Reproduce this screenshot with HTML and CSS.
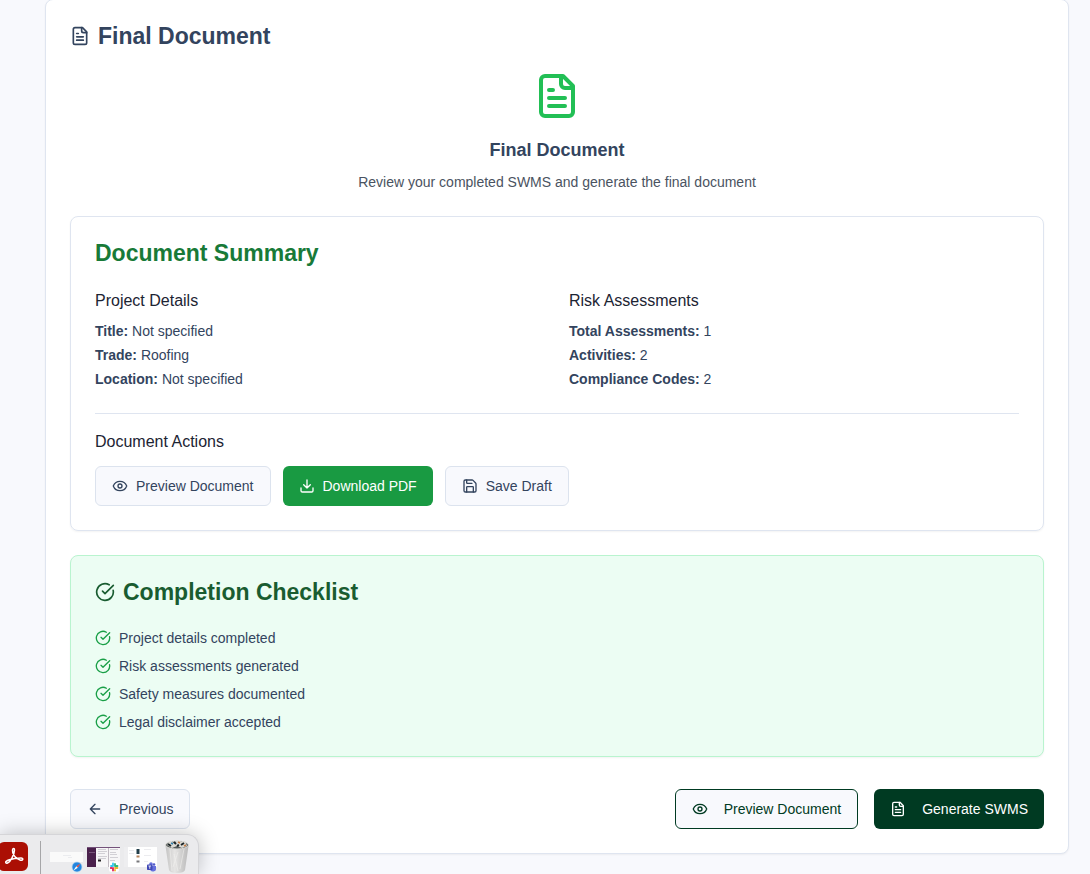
FILE: index.html
```html
<!DOCTYPE html>
<html lang="en">
<head>
<meta charset="utf-8">
<title>Final Document</title>
<link rel="stylesheet" href="styles.css">
</head>
<body>
<svg class="sprite" aria-hidden="true">
  <symbol id="file" viewBox="0 0 24 24"><path d="M15 2H6a2 2 0 0 0-2 2v16a2 2 0 0 0 2 2h12a2 2 0 0 0 2-2V7Z"/><path d="M14 2v4a2 2 0 0 0 2 2h4M10 9H8M16 13H8M16 17H8"/></symbol>
  <symbol id="eye" viewBox="0 0 24 24"><path d="M2.062 12.348a1 1 0 0 1 0-.696 10.75 10.75 0 0 1 19.876 0 1 1 0 0 1 0 .696 10.75 10.75 0 0 1-19.876 0"/><circle cx="12" cy="12" r="3"/></symbol>
  <symbol id="download" viewBox="0 0 24 24"><path d="M21 15v4a2 2 0 0 1-2 2H5a2 2 0 0 1-2-2v-4M7 10l5 5 5-5M12 15V3"/></symbol>
  <symbol id="save" viewBox="0 0 24 24"><path d="M15.2 3a2 2 0 0 1 1.4.6l3.8 3.8a2 2 0 0 1 .6 1.4V19a2 2 0 0 1-2 2H5a2 2 0 0 1-2-2V5a2 2 0 0 1 2-2z"/><path d="M17 21v-7a1 1 0 0 0-1-1H8a1 1 0 0 0-1 1v7M7 3v4a1 1 0 0 0 1 1h7"/></symbol>
  <symbol id="check" viewBox="0 0 24 24"><path d="M21.801 10A10 10 0 1 1 17 3.335"/><path d="m9 11 3 3L22 4"/></symbol>
  <symbol id="back" viewBox="0 0 24 24"><path d="m12 19-7-7 7-7M19 12H5"/></symbol>
</svg>

<main class="card">
  <h1 class="heading"><svg class="icon icon-md"><use href="#file"/></svg>Final Document</h1>

  <header class="intro">
    <svg class="icon icon-xl"><use href="#file"/></svg>
    <h2 class="intro-title">Final Document</h2>
    <p class="intro-text">Review your completed SWMS and generate the final document</p>
  </header>

  <section class="panel">
    <h2 class="heading heading-green">Document Summary</h2>
    <div class="columns">
      <div>
        <h3 class="subheading">Project Details</h3>
        <div class="facts">
          <p><strong>Title:</strong> Not specified</p>
          <p><strong>Trade:</strong> Roofing</p>
          <p><strong>Location:</strong> Not specified</p>
        </div>
      </div>
      <div>
        <h3 class="subheading">Risk Assessments</h3>
        <div class="facts">
          <p><strong>Total Assessments:</strong> 1</p>
          <p><strong>Activities:</strong> 2</p>
          <p><strong>Compliance Codes:</strong> 2</p>
        </div>
      </div>
    </div>
    <div class="actions">
      <h3 class="subheading">Document Actions</h3>
      <div class="button-row">
        <button class="button" type="button"><svg class="icon"><use href="#eye"/></svg>Preview Document</button>
        <button class="button button-green" type="button"><svg class="icon"><use href="#download"/></svg>Download PDF</button>
        <button class="button" type="button"><svg class="icon"><use href="#save"/></svg>Save Draft</button>
      </div>
    </div>
  </section>

  <section class="panel panel-green">
    <h2 class="heading heading-dark"><svg class="icon icon-md"><use href="#check"/></svg>Completion Checklist</h2>
    <ul class="checklist">
      <li><svg class="icon"><use href="#check"/></svg>Project details completed</li>
      <li><svg class="icon"><use href="#check"/></svg>Risk assessments generated</li>
      <li><svg class="icon"><use href="#check"/></svg>Safety measures documented</li>
      <li><svg class="icon"><use href="#check"/></svg>Legal disclaimer accepted</li>
    </ul>
  </section>

  <footer class="footer">
    <button class="button button-wide" type="button"><svg class="icon"><use href="#back"/></svg>Previous</button>
    <div class="footer-end">
      <button class="button button-wide button-outline" type="button"><svg class="icon"><use href="#eye"/></svg>Preview Document</button>
      <button class="button button-wide button-dark" type="button"><svg class="icon"><use href="#file"/></svg>Generate SWMS</button>
    </div>
  </footer>
</main>

<aside class="dock" aria-label="Dock">
  <svg class="dock-art" width="198" height="39" viewBox="0 0 198 39">
    <defs>
      <linearGradient id="bin" x1="0" x2="1"><stop offset="0" stop-color="#c3c3c3"/><stop offset=".4" stop-color="#e6e5e4"/><stop offset="1" stop-color="#b9b9b9"/></linearGradient>
    </defs>
    <rect x="-2" y="7" width="30" height="29" rx="6" fill="#ab0f04"/>
    <path d="M6 28c-2-2 6-5 15-5 3 0 2 3-1 2-4-1-8-6-7.500-10 .3-2 2-2 2 0 0 4-4 12-7 13-.6.300-1.200.300-1.500 0z" fill="none" stroke="#fff" stroke-width="1.500"/>
    <path d="M40.500 6v33" stroke="#a6a6a8"/>
    <rect x="50" y="17" width="33" height="10" fill="#fafafa"/>
    <path d="M63 20.500h8M68 22.500h4" stroke="#e7e8ec" stroke-width=".8"/>
    <circle cx="77" cy="32" r="5" fill="#2386df" stroke="#b9d8ef" stroke-width=".7"/>
    <path d="m80.500 28.500-2.700 4.300-1.600-1.600z" fill="#f05745"/><path d="m73.500 35.500 2.700-4.300 1.600 1.600z" fill="#fff"/>
    <rect x="87" y="12" width="33" height="20" fill="#f7f6f7"/>
    <path d="M87 12h9v20h-9z" fill="#4a214c"/><path d="M87 12.500h33" stroke="#74517a"/><path d="M89 17.500h6" stroke="#8d6c8f" stroke-width=".7"/>
    <path d="M98 14.500h8M98 16.500h9M98 18.500h7M98 21.500h9M98 23.500h8M110 14.500h8M110 17.500h6M110 19.500h7M110 22.500h8M110 25.500h5" stroke="#d2d0d5"/>
    <path d="M108.500 13v19" stroke="#9a929c" stroke-width=".6"/><path d="M98 25.500h3" stroke="#222" stroke-width="2"/>
    <rect x="109" y="27" width="10" height="10" rx="2.500" fill="#fff"/>
    <g fill="none" stroke-width="1.800" stroke-linecap="round"><path d="M113 28.500v2.500M111 31h1" stroke="#36c5f0"/><path d="M115 29v2M117.500 31h-2" stroke="#2eb67d"/><path d="M115 33h2.500M115 35.500v-.5" stroke="#ecb22e"/><path d="M113 33v2.500M110.800 33h.5" stroke="#e01e5a"/></g>
    <rect x="124" y="12" width="33" height="20" fill="#fff"/><path d="M124 12h4v20h-4z" fill="#eeeef0"/><path d="M129 15.500h5M129 18.500h5M144 14.500h7M144 20.500h7M144 26.500h4" stroke="#ececef"/>
    <path d="M138 14v5" stroke="#233f4b" stroke-width="3"/><path d="M136.500 21.500h3" stroke="#b7855d" stroke-width="2"/><path d="M136.500 26.500h3" stroke="#77777a" stroke-width="2"/>
    <circle cx="151" cy="29" r="1.800" fill="#6670dd"/><circle cx="154" cy="29.500" r="1.300" fill="#5059c9"/><path d="M149 31h7v2a3 3 0 0 1-6 1z" fill="#6670dd"/><rect x="147" y="29.500" width="5.500" height="5.500" rx=".8" fill="#3f48b6"/><path d="M148.400 31h2.700M149.750 31v2.800" stroke="#fff" stroke-width=".8"/>
    <path d="M165.500 11h23l-3.500 24q-1 3-8 3t-8-3z" fill="url(#bin)"/>
    <path d="m170 14 2 22M174 19l4 17M184 14l-4 20M178 17l-5 15" stroke="#f5f4f2" opacity=".5"/>
    <ellipse cx="177" cy="10" rx="11.500" ry="4" fill="#555a59" stroke="#deddda"/>
    <path d="m167 10 3-4 4 2 3-3 4 2 4-1 2 5-5 2-5-2-5 2z" fill="#dcdad4"/>
    <path d="m168 9 3 2M174 7l2 2M181 10l3-2M177 11l2-1" stroke="#1c2628" stroke-width="2"/><path d="m171 8 2 1" stroke="#327eaa" stroke-width="1.500"/><path d="m178 7 2 1M184 11l2-1" stroke="#c47b43" stroke-width="1.500"/>
  </svg>
</aside>
</body>
</html>
```

FILE: styles.css
```css
* { box-sizing: border-box; }

body {
  margin: 0;
  padding: 0 21px 20px 45px;
  background: #f8f9fd;
  color: #33445e;
  font-family: "Liberation Sans", Arial, sans-serif;
  font-size: 14px;
  line-height: 20px;
}

h1, h2, h3, p, ul { margin: 0; padding: 0; }

.sprite { position: absolute; width: 0; height: 0; }

.icon {
  width: 16px;
  height: 16px;
  flex: none;
  fill: none;
  stroke: currentColor;
  stroke-width: 2;
  stroke-linecap: round;
  stroke-linejoin: round;
}
.icon-md { width: 20px; height: 20px; }
.icon-xl { width: 48px; height: 48px; color: #22bf55; }

.card {
  margin-top: -1px;
  padding: 24px;
  background: #fff;
  border: 1px solid #dfe5f0;
  border-radius: 8px;
  box-shadow: 0 1px 2px rgba(0, 0, 0, 0.05);
}

.heading {
  display: flex;
  align-items: center;
  gap: 8px;
  margin-bottom: 24px;
  font-size: 23px;
  line-height: 24px;
  font-weight: 700;
}
.heading-green { color: #187a38; }
.heading-dark { color: #195c30; }

.intro {
  display: flex;
  flex-direction: column;
  align-items: center;
  margin-bottom: 24px;
  text-align: center;
}
.intro-title { margin: 16px 0 8px; font-size: 18px; line-height: 28px; }
.intro-text { color: #4a5361; }

.panel {
  margin-bottom: 24px;
  padding: 24px;
  border: 1px solid #dfe5f0;
  border-radius: 8px;
  box-shadow: 0 1px 2px rgba(0, 0, 0, 0.05);
}
.panel-green { margin-bottom: 32px; background: #ecfdf3; border-color: #b9f4cf; }

.columns { display: grid; grid-template-columns: 1fr 1fr; gap: 24px; margin-bottom: 24px; }
.subheading { margin-bottom: 8px; color: #1c2433; font-size: 16px; line-height: 24px; font-weight: 400; }
.facts { display: grid; gap: 4px; }

.actions { padding-top: 16px; border-top: 1px solid #dfe5f0; }
.actions .subheading { margin-bottom: 12px; }
.button-row { display: flex; flex-wrap: wrap; gap: 12px; }

.button {
  display: inline-flex;
  align-items: center;
  justify-content: center;
  gap: 8px;
  height: 40px;
  padding: 0 16px;
  border: 1px solid #dce3ee;
  border-radius: 6px;
  background: #f8f9fd;
  color: #33445e;
  font: inherit;
}
.button-wide { gap: 16px; }
.button-green { border: 0; background: #199a42; color: #fff; }
.button-outline { border-color: #003a22; color: #003a22; }
.button-dark { border: 0; background: #003a22; color: #fff; }

.checklist { display: grid; gap: 8px; list-style: none; }
.checklist li { display: flex; align-items: center; gap: 8px; }
.checklist .icon { color: #199f47; }

.footer { display: flex; justify-content: space-between; }
.footer-end { display: flex; gap: 16px; }

.dock {
  position: fixed;
  left: 0;
  bottom: 0;
  border-top: 1px solid #d5d5d8;
  border-right: 1px solid #d5d5d8;
  border-top-right-radius: 12px;
  background: #ebebed;
  box-shadow: 0 0 20px rgba(0, 0, 0, 0.25);
}
.dock-art { display: block; }
```
